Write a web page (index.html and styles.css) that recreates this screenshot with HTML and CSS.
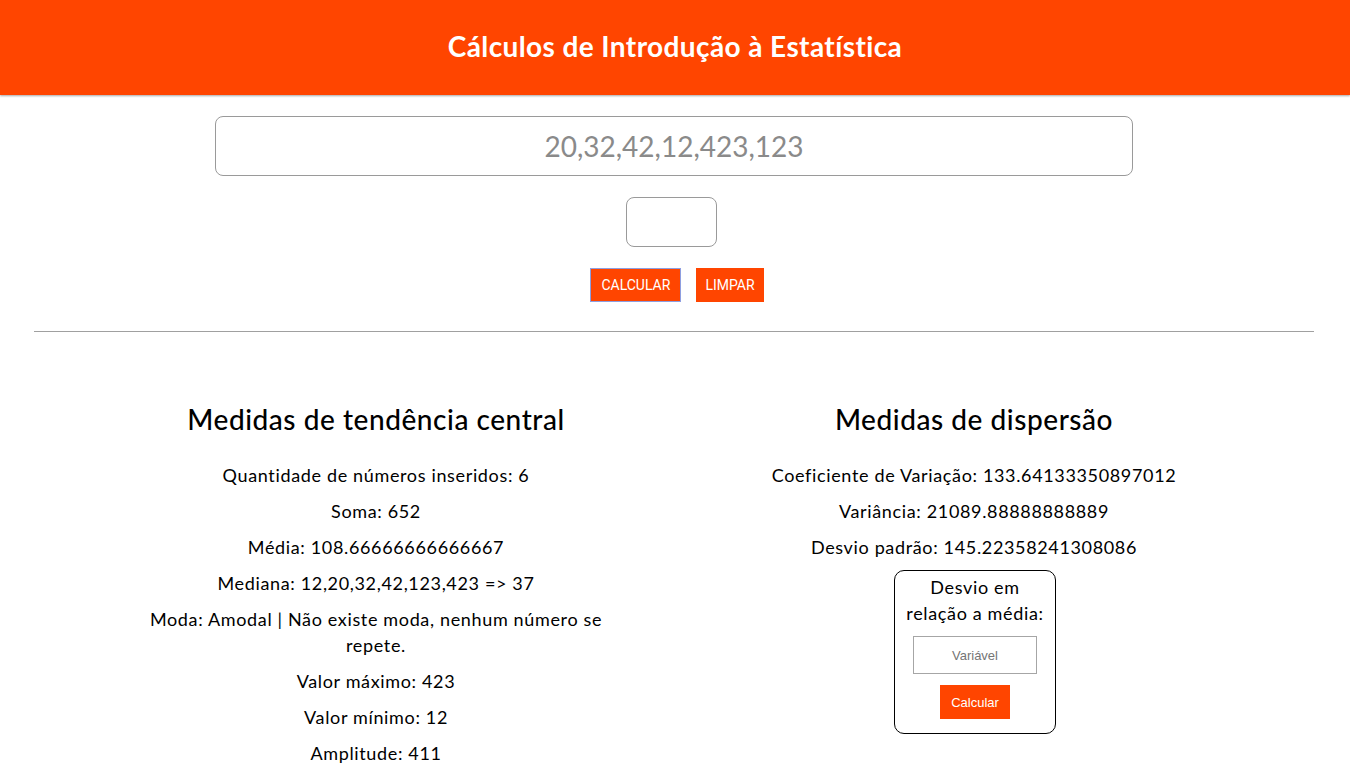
FILE: index.html
```html
<!DOCTYPE html>
<html lang="pt-BR">
<head>
<meta charset="utf-8">
<title>Cálculos de Introdução à Estatística</title>
<link rel="stylesheet" href="styles.css">
</head>
<body>
<header class="topbar">
  <h1 class="title">Cálculos de Introdução à Estatística</h1>
</header>
<main class="main">
  <section class="form">
    <input class="numbers" type="text" placeholder="20,32,42,12,423,123">
    <input class="small-input" type="text">
    <div class="actions">
      <button class="btn btn-focus">CALCULAR</button>
      <button class="btn">LIMPAR</button>
    </div>
  </section>
  <hr class="divider">
  <section class="results">
    <div class="col">
      <h2 class="col-title">Medidas de tendência central</h2>
      <p>Quantidade de números inseridos: 6</p>
      <p>Soma: 652</p>
      <p>Média: 108.66666666666667</p>
      <p>Mediana: 12,20,32,42,123,423 =&gt; 37</p>
      <p>Moda: Amodal | Não existe moda, nenhum número se repete.</p>
      <p>Valor máximo: 423</p>
      <p>Valor mínimo: 12</p>
      <p>Amplitude: 411</p>
    </div>
    <div class="col">
      <h2 class="col-title">Medidas de dispersão</h2>
      <p>Coeficiente de Variação: 133.64133350897012</p>
      <p>Variância: 21089.88888888889</p>
      <p>Desvio padrão: 145.22358241308086</p>
      <div class="deviation">
        <p class="deviation-label">Desvio em relação a média:</p>
        <input class="var-input" type="text" placeholder="Variável">
        <button class="small-btn">Calcular</button>
      </div>
    </div>
  </section>
</main>
</body>
</html>
```

FILE: styles.css
```css
* { box-sizing: border-box; }

body {
  margin: 0;
  font-family: Lato, "Noto Sans", sans-serif;
  color: #000;
  background: #fff;
}

.topbar {
  height: 95px;
  background: #ff4500;
  display: flex;
  align-items: center;
  justify-content: center;
  box-shadow: 0 1px 2px rgba(0, 0, 0, 0.35);
}

.title {
  margin: 0;
  color: #fff;
  font-size: 28px;
  font-weight: 700;
  line-height: 34px;
  letter-spacing: 0.4px;
  padding-bottom: 4px;
}

.main {
  padding: 21px 36px 0 34px;
}

.form {
  display: flex;
  flex-direction: column;
  align-items: center;
  gap: 21px;
}

.numbers {
  width: 918px;
  height: 60px;
  border: 1px solid #9a9a9a;
  border-radius: 8px;
  text-align: center;
  font-family: Lato, sans-serif;
  font-size: 28px;
  color: #555;
  outline: none;
}
.numbers::placeholder { color: #8a8a8a; }

.small-input {
  width: 91px;
  height: 50px;
  border: 1px solid #9a9a9a;
  border-radius: 8px;
  outline: none;
  margin-right: 6px;
}

.actions {
  display: flex;
  gap: 15px;
  margin-left: 6px;
}

.btn {
  height: 34px;
  padding: 0 8px;
  border: 1px solid #ff4500;
  background: #ff4500;
  color: #fff;
  font-family: Roboto, sans-serif;
  font-size: 14px;
  cursor: pointer;
}
.btn-focus {
  border-color: #8e9ee0;
  width: 91px;
}

.divider {
  margin: 29px 0 0;
  border: 0;
  border-top: 1px solid #a0a0a0;
}

.results {
  display: grid;
  grid-template-columns: 470px 470px;
  justify-content: center;
  column-gap: 128px;
  padding-top: 70px;
  margin-left: 2px;
}

.col {
  text-align: center;
}

.col-title {
  margin: 0 0 26px;
  font-size: 28px;
  font-weight: 500;
  line-height: 34px;
  letter-spacing: 0.55px;
}

.col p {
  margin: 10px 0;
  font-size: 18px;
  line-height: 26px;
  letter-spacing: 0.65px;
}

.deviation {
  width: 162px;
  margin: 10px auto 0;
  border: 1px solid #000;
  border-radius: 10px;
  padding: 3px 6px 14px;
  display: flex;
  flex-direction: column;
  align-items: center;
  position: relative;
  left: 1px;
}

.col .deviation-label {
  margin: 0 0 10px;
}

.var-input {
  width: 124px;
  height: 38px;
  border: 1px solid #a6a6a6;
  text-align: center;
  font-family: Arial, "Liberation Sans", sans-serif;
  font-size: 13px;
  letter-spacing: 0;
  outline: none;
}
.var-input::placeholder { color: #757575; }

.small-btn {
  margin-top: 11px;
  height: 34px;
  padding: 0 11px;
  border: 0;
  background: #ff4500;
  color: #fff;
  font-family: Arial, "Liberation Sans", sans-serif;
  font-size: 13px;
}
```
